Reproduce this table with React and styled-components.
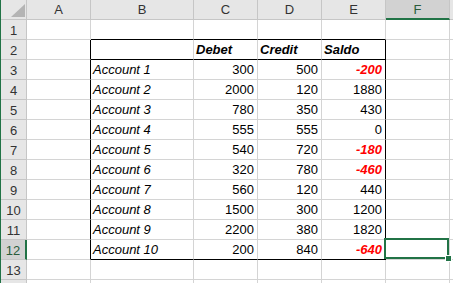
import React from "react";
import styled, { createGlobalStyle } from "styled-components";

const Global = createGlobalStyle`
  html, body { margin: 0; padding: 0; background: #fff; overflow: hidden; }
  body { font-family: "Liberation Sans", Arial, sans-serif; }
`;

const GREEN = "#217346";
const GRID = "#d4d4d4";
const HEAD_LINE = "#c6c6c6";

const Sheet = styled.div`
  display: grid;
  grid-template-columns: 26px 64px 103px 64px 64px 64px 64px 1fr;
  grid-auto-rows: 20px;
  border-left: 1px solid ${GREEN};
  width: 452px;
  height: 283px;
  overflow: hidden;
`;

const Corner = styled.div`
  box-sizing: border-box;
  display: flex;
  justify-content: flex-end;
  align-items: flex-end;
  padding: 0 1px 2px 0;
  background: #e6e6e6;
  border-right: 1px solid ${HEAD_LINE};
  border-bottom: 1px solid ${HEAD_LINE};
`;

const ColHead = styled.div`
  box-sizing: border-box;
  background: ${(p) => (p.$sel ? "#d2d2d2" : "#e6e6e6")};
  border-right: 1px solid ${HEAD_LINE};
  border-bottom: ${(p) => (p.$sel ? `2px solid ${GREEN}` : `1px solid ${HEAD_LINE}`)};
  color: ${(p) => (p.$sel ? "#2a5b3a" : "#333")};
  font-size: 13px;
  line-height: 19px;
  text-align: center;
`;

const RowHead = styled.div`
  box-sizing: border-box;
  background: ${(p) => (p.$sel ? "#d2d2d2" : "#e6e6e6")};
  border-right: ${(p) => (p.$sel ? `2px solid ${GREEN}` : `1px solid ${HEAD_LINE}`)};
  border-bottom: 1px solid ${HEAD_LINE};
  color: ${(p) => (p.$sel ? "#2a5b3a" : "#333")};
  font-size: 13px;
  line-height: 19px;
  padding-top: 1px;
  text-align: center;
`;

const Cell = styled.div`
  position: relative;
  box-sizing: border-box;
  border-right: 1px solid ${(p) => p.$rb || GRID};
  border-bottom: 1px solid ${(p) => p.$bb || GRID};
  padding: 0 3px 0 2px;
  font-size: 13px;
  line-height: 19px;
  white-space: nowrap;
  text-align: ${(p) => p.$align || "left"};
  font-style: ${(p) => (p.$italic ? "italic" : "normal")};
  font-weight: ${(p) => (p.$bold ? "bold" : "normal")};
  color: ${(p) => (p.$red ? "#ff0000" : "#000")};
`;

const Selection = styled.div`
  position: absolute;
  z-index: 2;
  left: -2px;
  top: -2px;
  right: 0;
  bottom: 0;
  border: 2px solid ${GREEN};
  pointer-events: none;
`;

const Handle = styled.div`
  position: absolute;
  right: -4px;
  bottom: -4px;
  width: 5px;
  height: 5px;
  background: ${GREEN};
  box-shadow: 0 0 0 1px #fff;
`;

const cols = ["A", "B", "C", "D", "E", "F", ""];

const data = [
  ["Account 1", 300, 500, -200],
  ["Account 2", 2000, 120, 1880],
  ["Account 3", 780, 350, 430],
  ["Account 4", 555, 555, 0],
  ["Account 5", 540, 720, -180],
  ["Account 6", 320, 780, -460],
  ["Account 7", 560, 120, 440],
  ["Account 8", 1500, 300, 1200],
  ["Account 9", 2200, 380, 1820],
  ["Account 10", 200, 840, -640],
];

function buildRow(r) {
  const cells = [];
  const inTable = r >= 2 && r <= 12;
  for (let c = 0; c < 7; c++) {
    const d = { key: c, text: "", props: {} };
    if (c === 0 && inTable) d.props.$rb = "#000";
    if (c === 4 && inTable) d.props.$rb = "#000";
    if (c >= 1 && c <= 4 && (r === 1 || r === 2 || r === 12)) d.props.$bb = "#000";
    if (r === 2) {
      if (c === 2) d.text = "Debet";
      if (c === 3) d.text = "Credit";
      if (c === 4) d.text = "Saldo";
      if (c >= 2 && c <= 4) {
        d.props.$bold = true;
        d.props.$italic = true;
      }
    }
    if (r >= 3 && r <= 12) {
      const row = data[r - 3];
      if (c === 1) {
        d.text = row[0];
        d.props.$italic = true;
      }
      if (c >= 2 && c <= 4) {
        d.text = String(row[c - 1]);
        d.props.$align = "right";
        if (c === 4 && row[3] < 0) {
          d.props.$red = true;
          d.props.$bold = true;
          d.props.$italic = true;
        }
      }
    }
    if (r === 12 && c === 5) d.selected = true;
    cells.push(d);
  }
  return cells;
}

export default function App() {
  const rows = [];
  for (let r = 1; r <= 14; r++) rows.push(r);
  return (
    <>
      <Global />
      <Sheet>
        <Corner>
          <svg width="14" height="13" viewBox="0 0 14 13">
            <polygon points="14,0 14,13 0,13" fill="#b4b4b4" />
          </svg>
        </Corner>
        {cols.map((c, i) => (
          <ColHead key={i} $sel={c === "F"}>
            {c}
          </ColHead>
        ))}
        {rows.map((r) => (
          <React.Fragment key={r}>
            <RowHead $sel={r === 12}>{r <= 13 ? r : ""}</RowHead>
            {buildRow(r).map((d) => (
              <Cell key={d.key} {...d.props}>
                {d.text}
                {d.selected && (
                  <Selection>
                    <Handle />
                  </Selection>
                )}
              </Cell>
            ))}
          </React.Fragment>
        ))}
      </Sheet>
    </>
  );
}
